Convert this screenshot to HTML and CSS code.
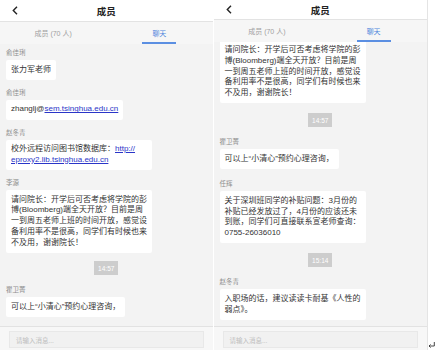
FILE: index.html
```html
<!DOCTYPE html>
<html lang="zh-CN">
<head>
  <meta charset="UTF-8">
  <meta name="viewport" content="width=device-width, initial-scale=1.0">
  <title>成员 - 聊天</title>
  <link rel="stylesheet" href="styles.css">
</head>
<body>
  <div class="shots">

    <!-- left screen: chat scrolled to the top -->
    <section class="phone phone-left">
      <div class="bar">
        <span class="back">
          <svg width="6" height="9" viewBox="0 0 6 9"><path d="M5 0.8 L1.3 4.5 L5 8.2" fill="none" stroke="#222" stroke-width="1.4"/></svg>
        </span>
        <span class="title">成员</span>
        <span></span>
      </div>
      <div class="tabs">
        <div class="tab">成员 (70 人)</div>
        <div class="tab active">聊天</div>
      </div>
      <div class="chat">
        <div class="msg">
          <div class="name">俞佳琍</div>
          <div class="bubble">张力军老师</div>
        </div>
        <div class="msg">
          <div class="name">俞佳琍</div>
          <div class="bubble">zhanglj@<a href="#">sem.tsinghua.edu.cn</a></div>
        </div>
        <div class="msg">
          <div class="name">赵冬青</div>
          <div class="bubble">校外远程访问图书馆数据库：<a href="#">http://<wbr>eproxy2.lib.tsinghua.edu.cn</a></div>
        </div>
        <div class="msg">
          <div class="name">李源</div>
          <div class="bubble">请问院长：开学后可否考虑将学院的彭博(Bloomberg)端全天开放？目前是周一到周五老师上班的时间开放，感觉设备利用率不是很高，同学们有时候也来不及用，谢谢院长！</div>
        </div>
        <div class="time">14:57</div>
        <div class="msg">
          <div class="name">瞿卫菁</div>
          <div class="bubble">可以上“小清心”预约心理咨询，</div>
        </div>
      </div>
      <div class="composer">
        <div class="input">请输入消息...</div>
      </div>
    </section>

    <!-- right screen: same chat, scrolled further down -->
    <section class="phone phone-right">
      <div class="bar">
        <span class="back">
          <svg width="6" height="9" viewBox="0 0 6 9"><path d="M5 0.8 L1.3 4.5 L5 8.2" fill="none" stroke="#222" stroke-width="1.4"/></svg>
        </span>
        <span class="title">成员</span>
        <span></span>
      </div>
      <div class="tabs">
        <div class="tab">成员 (70 人)</div>
        <div class="tab active">聊天</div>
      </div>
      <div class="chat">
        <div class="msg">
          <div class="bubble bubble-cut">请问院长：开学后可否考虑将学院的彭博(Bloomberg)端全天开放？目前是周一到周五老师上班的时间开放，感觉设备利用率不是很高，同学们有时候也来不及用，谢谢院长！</div>
        </div>
        <div class="time">14:57</div>
        <div class="msg">
          <div class="name">瞿卫菁</div>
          <div class="bubble">可以上“小清心”预约心理咨询，</div>
        </div>
        <div class="msg">
          <div class="name">任辉</div>
          <div class="bubble">关于深圳班同学的补贴问题：3月份的补贴已经发放过了，4月份的应该还未到账，同学们可直接联系宣老师查询：0755-26036010</div>
        </div>
        <div class="time">15:14</div>
        <div class="msg">
          <div class="name">赵冬青</div>
          <div class="bubble">入职场的话，建议读读卡耐基《人性的弱点》。</div>
        </div>
      </div>
      <div class="composer">
        <div class="input">请输入消息...</div>
      </div>
    </section>

    <div class="edge">
      <svg width="7" height="6" viewBox="0 0 7 6"><path d="M6.3 0 V4 H1 M2.6 2.4 L1 4 L2.6 5.6" fill="none" stroke="#333" stroke-width="0.9"/></svg>
    </div>
  </div>
</body>
</html>
```

FILE: styles.css
```css
body {
  margin: 0;
  background: #fff;
  font-family: "Liberation Sans", "Noto Sans CJK SC", sans-serif;
  color: #333;
}
.shots {
  display: flex;
  height: 350px;
}
.phone {
  display: flex;
  flex-direction: column;
  height: 350px;
  background: #f3f3f3;
  overflow: hidden;
}
.phone-left {
  width: 213px;
}
.phone-right {
  width: 214px;
  margin-left: 1px;
  border-right: 1px solid #e4e4e4;
}
.bar {
  display: grid;
  grid-template-columns: 1fr auto 1fr;
  align-items: center;
  height: 21px;
  background: #fff;
  border-bottom: 1px solid #e3e3e3;
  box-shadow: 0 1px 2px rgba(0, 0, 0, 0.05);
  flex-shrink: 0;
}
.phone-right .bar {
  height: 19px;
}
.back {
  display: flex;
  padding-left: 12px;
}
.title {
  font-size: 9.5px;
  font-weight: bold;
  color: #222;
}
.tabs {
  display: grid;
  grid-template-columns: 1fr 1fr;
  height: 22px;
  background: #f6f6f6;
  flex-shrink: 0;
}
.tab {
  display: flex;
  align-items: center;
  justify-content: center;
  font-size: 7px;
  color: #a0a0a0;
}
.tab.active {
  color: #4f86dd;
  background: linear-gradient(#5b8fe2, #5b8fe2) no-repeat center bottom / 34px 2px;
}
.chat {
  flex: 1;
  display: flex;
  flex-direction: column;
  align-items: flex-start;
  padding: 4px 6px 8px;
  overflow: hidden;
}
.phone-right .chat {
  padding-top: 0;
}
.msg {
  display: flex;
  flex-direction: column;
  align-items: flex-start;
  margin-bottom: 8px;
  flex-shrink: 0;
}
.phone-right .msg {
  margin-bottom: 10px;
}
.msg:last-child {
  margin-bottom: 0;
}
.name {
  font-size: 6.5px;
  line-height: 9px;
  color: #8e8e8e;
  margin-bottom: 3px;
}
.bubble {
  max-width: 146px;
  box-sizing: border-box;
  padding: 4.5px 5px;
  background: #fff;
  border-radius: 2px;
  font-size: 8px;
  line-height: 10.8px;
  color: #333;
}
.bubble-cut {
  padding-top: 3px;
  border-radius: 0 0 2px 2px;
}
.bubble a {
  color: #2a35c8;
}
.time {
  align-self: center;
  flex-shrink: 0;
  margin-bottom: 10px;
  padding: 3.5px 4px;
  background: #cdcdcd;
  color: #fff;
  font-size: 6.5px;
  line-height: 7px;
}
.msg + .time {
  margin-top: 0;
}
.composer {
  flex-shrink: 0;
  height: 24px;
  padding: 4px 9px 0;
  box-sizing: border-box;
  border-top: 1px solid #e2e2e2;
  background: #f7f7f7;
}
.input {
  height: 17px;
  box-sizing: border-box;
  padding-left: 6px;
  display: flex;
  align-items: center;
  background: #f1f1f1;
  border: 1px solid #e8e8e8;
  font-size: 6.5px;
  color: #bdbdbd;
}
.edge {
  flex: 1;
  display: flex;
  align-items: flex-end;
  padding-bottom: 2px;
}
```
